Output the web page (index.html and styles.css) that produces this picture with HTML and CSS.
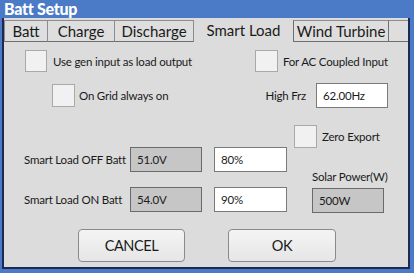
FILE: index.html
```html
<!DOCTYPE html>
<html>
<head>
<meta charset="utf-8">
<link rel="stylesheet" href="styles.css">
</head>
<body>
<div class="window">
  <div class="title">Batt Setup</div>
  <div class="panel">
    <div class="tabs">
      <div class="tab t-batt">Batt</div>
      <div class="tab t-charge">Charge</div>
      <div class="tab t-dis">Discharge</div>
      <div class="tab sel t-smart">Smart Load</div>
      <div class="tab t-wind">Wind Turbine</div>
      <div class="tab filler"></div>
    </div>
    <div class="row row1">
      <div class="cell c-use"><span class="cb"></span><span class="lbl">Use gen input as load output</span></div>
      <div class="cell c-ac"><span class="cb"></span><span class="lbl">For AC Coupled Input</span></div>
    </div>
    <div class="row row2">
      <div class="cell c-grid"><span class="cb cb23"></span><span class="lbl">On Grid always on</span></div>
      <div class="cell c-frz"><span class="lbl">High Frz</span><span class="inp white">62.00Hz</span></div>
    </div>
    <div class="row row3">
      <div class="cell c-zero"><span class="cb cb23"></span><span class="lbl">Zero Export</span></div>
    </div>
    <div class="row row4">
      <span class="lbl name">Smart Load OFF Batt</span>
      <span class="inp gray">51.0V</span>
      <span class="inp white w2">80%</span>
      <span class="lbl solar">Solar Power(W)</span>
    </div>
    <div class="row row5">
      <span class="lbl name">Smart Load ON Batt</span>
      <span class="inp gray">54.0V</span>
      <span class="inp white w2">90%</span>
      <span class="inp gray solar-in">500W</span>
    </div>
    <div class="row row6">
      <div class="btn cancel">CANCEL</div>
      <div class="btn ok">OK</div>
    </div>
  </div>
</div>
</body>
</html>
```
FILE: styles.css
```css
* { box-sizing: border-box; }
html, body { margin: 0; padding: 0; }
body { font-family: "Lato", "Liberation Sans", sans-serif; color: #1a1a1a; }
.window {
  width: 414px; height: 273px; background: #4b7ac6;
  display: flex; flex-direction: column; overflow: hidden;
}
.title {
  height: 18px; line-height: 18px; padding-left: 4px;
  color: #fff; font-weight: 900; font-size: 16px; letter-spacing: -0.3px;
}
.panel {
  flex: 1; margin: 0 4px 4px 2px;
  border: 2px solid #1c2a55; border-top: none;
  background: #dcdcdc;
}
.tabs { display: flex; margin-top: 2px; height: 22px; }
.tab {
  height: 22px; line-height: 21px; text-align: center; font-size: 15px;
  border-top: 1px solid #8c8c8c; border-bottom: 1px solid #6e6e6e;
  border-right: 1px solid #8c8c8c;
  background: #dedede;
}
.t-batt { width: 44px; border-left: 1px solid #8c8c8c; }
.t-charge { width: 67px; }
.t-dis { width: 79px; }
.t-smart { width: 99px; }
.sel { border: none; background: #dcdcdc; }
.t-wind { width: 96px; border-left: 1px solid #6e6e6e; border-right-color: #6e6e6e; }
.filler { flex: 1; border-right: none; }

.row { display: flex; align-items: center; }
.cell { display: flex; align-items: center; }
.lbl { font-size: 11.5px; letter-spacing: -0.2px; white-space: nowrap; }
.cb {
  width: 22px; height: 22px; flex: none;
  border: 1px solid #a9a9a9; background: #f1f1f1;
}
.cb23 { width: 23px; height: 23px; }

.row1 { margin-top: 8px; height: 22px; }
.c-use { width: 251px; padding-left: 21px; gap: 6px; }
.c-ac { gap: 5px; }
.c-ac .cb { width: 23px; }

.row2 { margin-top: 11px; height: 25px; }
.c-grid { padding-left: 48px; gap: 4px; }
.c-frz { margin-left: auto; padding-right: 20px; gap: 10px; }

.inp {
  width: 72px; height: 25px; line-height: 23px; padding-left: 6px;
  font-size: 11.5px; letter-spacing: -0.2px; flex: none;
}
.white { background: #fff; border: 1px solid #7a7a7a; }
.gray { background: #c6c6c6; border: 1px solid #6a6a6a; }

.row3 { margin-top: 17px; height: 22px; }
.c-zero { padding-left: 290px; gap: 5px; }

.row4, .row5 { height: 25px; padding-left: 20px; }
.name { width: 106px; }
.w2 { margin-left: 12px; width: 73px; }
.solar { margin-left: 25px; align-self: flex-start; margin-top: 23px; line-height: 14px; }
.row5 { margin-top: 15px; }
.solar-in { margin-left: 25px; margin-top: 2px; }

.row6 { margin-top: 17px; height: 33px; padding-left: 74px; gap: 43px; }
.btn {
  height: 33px; border: 1px solid #8a8a8a; border-radius: 4px;
  background: linear-gradient(#f4f4f4, #e6e6e6);
  font-size: 14.5px; letter-spacing: -0.4px;
  display: flex; align-items: center; justify-content: center;
}
.cancel { width: 107px; }
.ok { width: 108px; }
```
